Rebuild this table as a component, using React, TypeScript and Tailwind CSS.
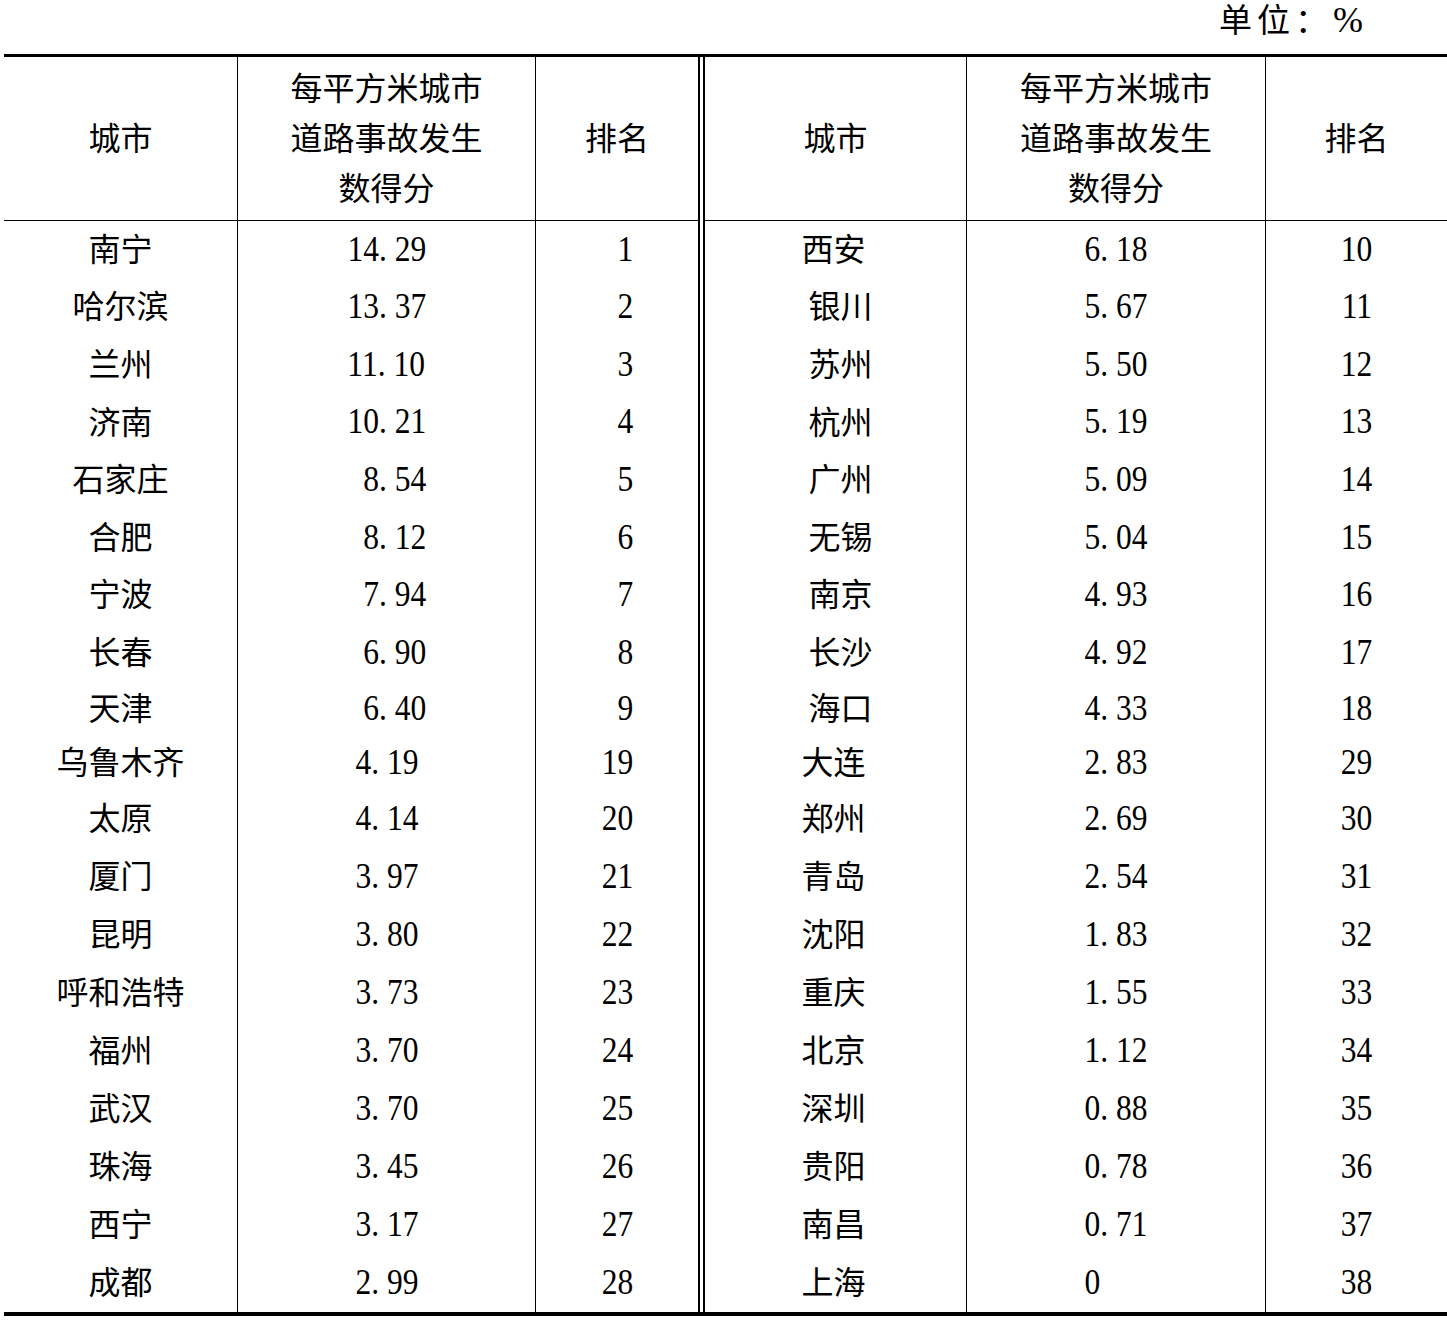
const FS = "\u2007";

type Row = {
  l: [string, string, string];
  r: [string, string, string];
  shift?: boolean;
};

const rows: Row[] = [
  { l: ["南宁", "14. 29", FS + "1"], r: ["西安", "6. 18", "10"] },
  { l: ["哈尔滨", "13. 37", FS + "2"], r: ["银川", "5. 67", "11"], shift: true },
  { l: ["兰州", "11. 10", FS + "3"], r: ["苏州", "5. 50", "12"], shift: true },
  { l: ["济南", "10. 21", FS + "4"], r: ["杭州", "5. 19", "13"], shift: true },
  { l: ["石家庄", FS + "8. 54", FS + "5"], r: ["广州", "5. 09", "14"], shift: true },
  { l: ["合肥", FS + "8. 12", FS + "6"], r: ["无锡", "5. 04", "15"], shift: true },
  { l: ["宁波", FS + "7. 94", FS + "7"], r: ["南京", "4. 93", "16"], shift: true },
  { l: ["长春", FS + "6. 90", FS + "8"], r: ["长沙", "4. 92", "17"], shift: true },
  { l: ["天津", FS + "6. 40", FS + "9"], r: ["海口", "4. 33", "18"], shift: true },
  { l: ["乌鲁木齐", "4. 19", "19"], r: ["大连", "2. 83", "29"] },
  { l: ["太原", "4. 14", "20"], r: ["郑州", "2. 69", "30"] },
  { l: ["厦门", "3. 97", "21"], r: ["青岛", "2. 54", "31"] },
  { l: ["昆明", "3. 80", "22"], r: ["沈阳", "1. 83", "32"] },
  { l: ["呼和浩特", "3. 73", "23"], r: ["重庆", "1. 55", "33"] },
  { l: ["福州", "3. 70", "24"], r: ["北京", "1. 12", "34"] },
  { l: ["武汉", "3. 70", "25"], r: ["深圳", "0. 88", "35"] },
  { l: ["珠海", "3. 45", "26"], r: ["贵阳", "0. 78", "36"] },
  { l: ["西宁", "3. 17", "27"], r: ["南昌", "0. 71", "37"] },
  { l: ["成都", "2. 99", "28"], r: ["上海", "0", "38"] },
];

// row heights, measured off the scan (9th/10th rows sit closer)
const heights = [
  "h-[57.6px]", "h-[57.6px]", "h-[57.6px]", "h-[57.6px]", "h-[57.6px]",
  "h-[57.6px]", "h-[57.6px]", "h-[57.6px]", "h-[54px]", "h-[54px]",
  "h-[58px]", "h-[58px]", "h-[58px]", "h-[58px]", "h-[58px]",
  "h-[58px]", "h-[58px]", "h-[58px]", "h-[58px]",
];

function Header({ cityW, valW }: { cityW: string; valW: string }) {
  return (
    <div className="flex h-[164px] border-b border-black">
      <div className={`${cityW} border-r border-black flex items-center justify-center`}>城市</div>
      <div className={`${valW} border-r border-black flex flex-col items-center justify-center leading-[50px]`}>
        <span>每平方米城市</span>
        <span>道路事故发生</span>
        <span>数得分</span>
      </div>
      <div className="flex-1 flex items-center justify-center">排名</div>
    </div>
  );
}

// the scan's digits are a narrow, tall Times
function Num({ children }: { children: React.ReactNode }) {
  return <span className="inline-block whitespace-pre text-[35px] scale-x-[0.9]">{children}</span>;
}

function Value({ v }: { v: string }) {
  if (v === "0") {
    return (
      <Num>
        0<span className="invisible">. 00</span>
      </Num>
    );
  }
  return <Num>{v}</Num>;
}

function Half({ side }: { side: "l" | "r" }) {
  const cityW = side === "l" ? "w-[234px]" : "w-[262px]";
  const valW = side === "l" ? "w-[298px]" : "w-[299px]";
  return (
    <div
      className={
        side === "l"
          ? "w-[696px] border-r-2 border-black flex flex-col"
          : "flex-1 border-l-2 border-black flex flex-col"
      }
    >
      <Header cityW={cityW} valW={valW} />
      {rows.map((row, i) => {
        const [city, val, rank] = row[side];
        const shift = side === "r" && row.shift;
        return (
          <div key={i} className={`flex ${heights[i]}`}>
            <div
              className={`${cityW} border-r border-black flex items-center justify-center ${shift ? "pl-[10px]" : side === "r" ? "pr-[4px]" : ""}`}
            >
              {city}
            </div>
            <div className={`${valW} border-r border-black flex items-center justify-center`}>
              <Value v={val} />
            </div>
            <div className="flex-1 flex items-center justify-center">
              <Num>{rank}</Num>
            </div>
          </div>
        );
      })}
    </div>
  );
}

function App() {
  return (
    <div className="min-h-[1322px] w-[1447px] bg-white text-black font-['Liberation_Serif','Noto_Sans_CJK_SC',serif] text-[32px] overflow-hidden">
      <div className="h-[54px] flex justify-end items-start pr-[79px]">
        <span className="text-[33px] leading-[40px] tracking-[5px]">
          单位：<span className="text-[36px]">%</span>
        </span>
      </div>

      {/* TABLE */}
      <div className="ml-[4px] border-t-[3px] border-b-[4px] border-black flex">
        <Half side="l" />
        <div className="w-[3px]" />
        <Half side="r" />
      </div>
    </div>
  );
}

export default App;
